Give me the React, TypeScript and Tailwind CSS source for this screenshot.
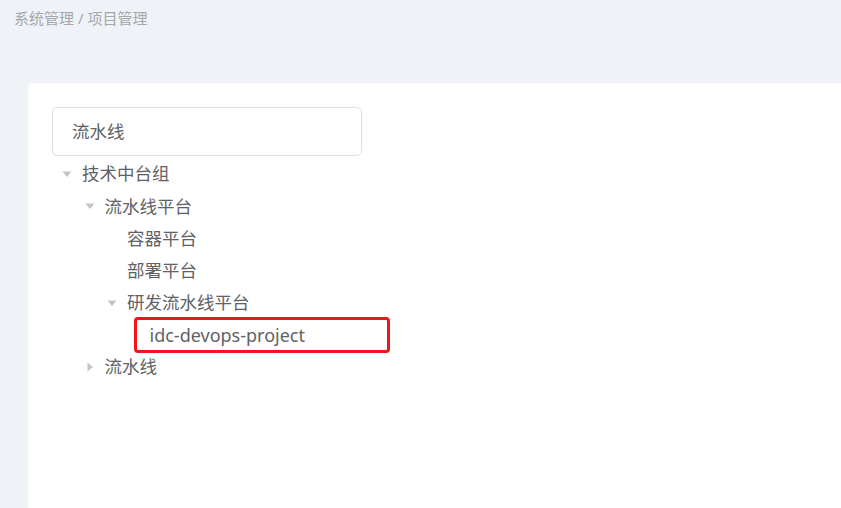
import React from "react";

interface TreeNode {
  label: string;
  level: number;
  state: "open" | "closed" | "leaf";
  marked?: boolean;
}

const nodes: TreeNode[] = [
  { label: "技术中台组", level: 0, state: "open" },
  { label: "流水线平台", level: 1, state: "open" },
  { label: "容器平台", level: 2, state: "leaf" },
  { label: "部署平台", level: 2, state: "leaf" },
  { label: "研发流水线平台", level: 2, state: "open" },
  { label: "idc-devops-project", level: 3, state: "leaf", marked: true },
  { label: "流水线", level: 1, state: "closed" },
];

const indent = ["pl-0", "pl-[22.5px]", "pl-[45px]", "pl-[67.5px]"];

function Caret({ state }: { state: TreeNode["state"] }) {
  if (state === "leaf") return <span className="w-[30px] shrink-0" />;
  return (
    <span className="w-[30px] h-full shrink-0 flex items-center justify-center">
      <svg
        width="10"
        height="10"
        viewBox="0 0 10 10"
        className={state === "open" ? "rotate-90" : ""}
      >
        <path d="M2.5 0.5 L8 5 L2.5 9.5 Z" fill="#c0c4cc" />
      </svg>
    </span>
  );
}

export default function App() {
  return (
    <div
      className="w-[841px] h-[508px] overflow-hidden bg-[#eff2f6] flex flex-col"
      style={{ fontFamily: '"Noto Sans", "Noto Sans CJK SC", sans-serif' }}
    >
      <div className="h-[83px] pl-[14px] pt-[6px] text-[15px] leading-[24px] text-[#a5a8ad]">
        系统管理 / 项目管理
      </div>

      <div className="flex-1 ml-[28px] bg-white rounded-tl-[5px] pl-[24px] pt-[24px]">
        <div className="w-[310px] h-[49px] border border-[#dcdfe6] rounded-[5px] flex items-center pl-[19px] text-[17.5px] text-[#606266]">
          流水线
        </div>

        <div className="mt-[2px] w-[340px] text-[17.5px] text-[#606266]">
          {nodes.map((n) => (
            <div
              key={n.label}
              className={`relative h-[32.2px] flex items-center ${indent[n.level]}`}
            >
              <Caret state={n.state} />
              <span
                className={`whitespace-nowrap leading-none ${n.marked ? "text-[18px]" : ""}`}
              >
                {n.label}
              </span>
              {n.marked && (
                <div className="absolute left-[82px] top-[-1.5px] w-[256px] h-[36px] border-[3px] border-[#f5141a] rounded-[4px]" />
              )}
            </div>
          ))}
        </div>
      </div>
    </div>
  );
}
